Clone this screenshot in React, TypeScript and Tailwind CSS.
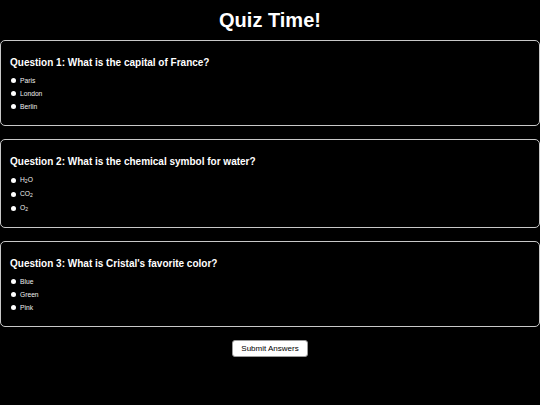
type Question = {
  title: string
  options: React.ReactNode[]
  rowH: string
  pb: string
}

const questions: Question[] = [
  {
    title: 'Question 1: What is the capital of France?',
    options: ['Paris', 'London', 'Berlin'],
    rowH: 'h-[13px]',
    pb: 'pb-[12px]',
  },
  {
    title: 'Question 2: What is the chemical symbol for water?',
    options: [
      <>H<sub className="text-[5px]">2</sub>O</>,
      <>CO<sub className="text-[5px]">2</sub></>,
      <>O<sub className="text-[5px]">2</sub></>,
    ],
    rowH: 'h-[14px]',
    pb: 'pb-[12px]',
  },
  {
    title: "Question 3: What is Cristal's favorite color?",
    options: ['Blue', 'Green', 'Pink'],
    rowH: 'h-[13px]',
    pb: 'pb-[12px]',
  },
]

function QuestionCard({ q }: { q: Question }) {
  return (
    <div className={`border border-[#c8c8c8] rounded-[5px] px-[9px] pt-[16px] ${q.pb}`}>
      <h2 className="text-[10px] leading-[12px] font-bold text-white">{q.title}</h2>
      <ul className="mt-[5px]">
        {q.options.map((opt, i) => (
          <li key={i} className={`flex items-center ${q.rowH} text-[6.7px] text-[#f0f0f0]`}>
            <span className="ml-[1px] w-[5px] h-[5px] rounded-full bg-white" />
            <span className="ml-[4px] leading-[8px]">{opt}</span>
          </li>
        ))}
      </ul>
    </div>
  )
}

export default function App() {
  return (
    <div
      className="w-[540px] h-[405px] bg-black text-white overflow-hidden"
      style={{ fontFamily: '"Liberation Sans", Arial, sans-serif' }}
    >
      <h1 className="pt-[8px] text-[20px] leading-[24px] font-bold text-center">Quiz Time!</h1>
      <div className="mt-[8px] flex flex-col gap-[13px]">
        {questions.map((q, i) => (
          <QuestionCard key={i} q={q} />
        ))}
      </div>
      <div className="mt-[13px] flex justify-center">
        <button className="h-[17px] px-[8px] bg-white text-black text-[8px] rounded-[3px] border border-[#999]">
          Submit Answers
        </button>
      </div>
    </div>
  )
}
